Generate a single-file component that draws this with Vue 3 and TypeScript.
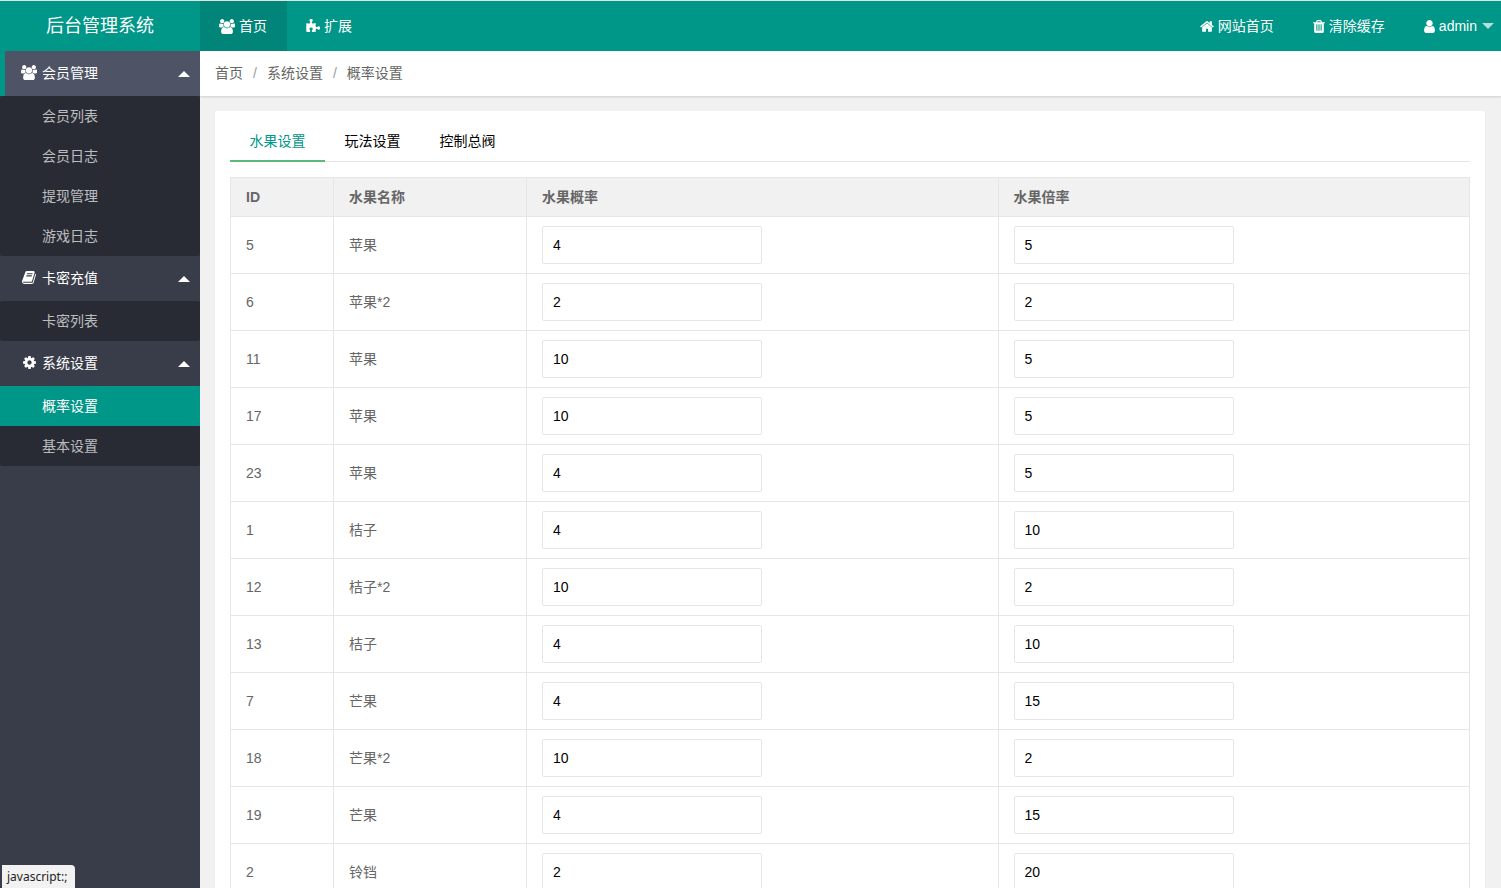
<script setup lang="ts">
import { ref, reactive } from 'vue'

interface Icon { box: string; width: number; path: string }
interface NavLink { label: string; icon: string; active?: boolean; more?: boolean }
interface MenuGroup { label: string; icon: string; focused?: boolean; open: boolean; items: string[] }
interface Fruit { id: number; name: string; chance: string; rate: string }

const icons: Record<string, Icon> = {
  users: { box: '0 0 1920 1792', width: 16, path: 'M593 896q-162 5-265 128h-134q-82 0-138-40.5t-56-118.5q0-353 124-353 6 0 43.5 21t97.5 42.5 119 21.5q67 0 133-23-5 37-5 66 0 159 93 256zm1071 637q0 120-73 189.5t-194 69.5h-874q-121 0-194-69.5t-73-189.5q0-53 3.5-103.5t14-109 26.5-108.5 43-97.5 62-81 85.5-53.5 111.5-20q10 0 43 21.5t73 48 107 48 135 21.5 135-21.5 107-48 73-48 43-21.5q61 0 111.5 20t85.5 53.5 62 81 43 97.5 26.5 108.5 14 109 3.5 103.5zm-1024-1277q0 106-75 181t-181 75-181-75-75-181 75-181 181-75 181 75 75 181zm704 384q0 159-112.5 271.5t-271.5 112.5-271.5-112.5-112.5-271.5 112.5-271.5 271.5-112.5 271.5 112.5 112.5 271.5zm576 225q0 78-56 118.5t-138 40.5h-134q-103-123-265-128 93-97 93-256 0-29-5-66 66 23 133 23 59 0 119-21.5t97.5-42.5 43.5-21q124 0 124 353zm-128-609q0 106-75 181t-181 75-181-75-75-181 75-181 181-75 181 75 75 181z' },
  home: { box: '64 0 1664 1792', width: 14, path: 'M1472 992v480q0 26-19 45t-45 19h-384v-384h-256v384h-384q-26 0-45-19t-19-45v-480q0-1 .5-3t.5-3l575-474 575 474q1 2 1 6zm223-69l-62 74q-8 9-21 11h-3q-13 0-21-7l-692-577-692 577q-12 8-24 7-13-2-21-11l-62-74q-8-10-7-23.5t11-21.5l719-599q32-26 76-26t76 26l244 204v-195q0-14 9-23t23-9h192q14 0 23 9t9 23v408l219 182q10 8 11 21.5t-7 23.5z' },
  trash: { box: '192 0 1408 1792', width: 12, path: 'M704 1376v-704q0-14-9-23t-23-9h-64q-14 0-23 9t-9 23v704q0 14 9 23t23 9h64q14 0 23-9t9-23zm256 0v-704q0-14-9-23t-23-9h-64q-14 0-23 9t-9 23v704q0 14 9 23t23 9h64q14 0 23-9t9-23zm256 0v-704q0-14-9-23t-23-9h-64q-14 0-23 9t-9 23v704q0 14 9 23t23 9h64q14 0 23-9t9-23zm-544-992h448l-48-117q-7-9-17-11h-317q-10 2-17 11zm928 32v64q0 14-9 23t-23 9h-96v948q0 83-47 143.5t-113 60.5h-832q-66 0-113-58.5t-47-141.5v-952h-96q-14 0-23-9t-9-23v-64q0-14 9-23t23-9h309l70-167q15-37 54-63t79-26h320q40 0 79 26t54 63l70 167h309q14 0 23 9t9 23z' },
  user: { box: '256 0 1280 1792', width: 11, path: 'M1536 1399q0 109-62.5 187t-150.5 78h-854q-88 0-150.5-78t-62.5-187q0-85 8.5-160.5t31.5-152 58.5-131 94-89 134.5-34.5q131 128 313 128t313-128q76 0 134.5 34.5t94 89 58.5 131 31.5 152 8.5 160.5zm-256-887q0 159-112.5 271.5t-271.5 112.5-271.5-112.5-112.5-271.5 112.5-271.5 271.5-112.5 271.5 112.5 112.5 271.5z' },
  cog: { box: '128 0 1536 1792', width: 13, path: 'M1152 896q0-106-75-181t-181-75-181 75-75 181 75 181 181 75 181-75 75-181zm512-109v222q0 12-8 23t-20 13l-185 28q-19 54-39 91 35 50 107 138 10 12 10 25t-9 23q-27 37-99 108t-94 71q-12 0-26-9l-138-108q-44 23-91 38-16 136-29 186-7 28-36 28h-222q-14 0-24.5-8.5t-11.5-21.5l-28-184q-49-16-90-37l-141 107q-10 9-25 9-14 0-25-11-126-114-165-168-7-10-7-23 0-12 8-23 15-21 51-66.5t54-70.5q-27-50-41-99l-183-27q-13-2-21-12.5t-8-23.5v-222q0-12 8-23t19-13l186-28q14-46 39-92-40-57-107-138-10-12-10-24 0-10 9-23 26-36 98.5-107.5t94.5-71.5q13 0 26 10l138 107q44-23 91-38 16-136 29-186 7-28 36-28h222q14 0 24.5 8.5t11.5 21.5l28 184q49 16 90 37l142-107q9-9 24-9 13 0 25 10 129 119 165 170 7 8 7 22 0 12-8 23-15 21-51 66.5t-54 70.5q26 50 41 98l183 28q13 2 21 12.5t8 23.5z' },
  book: { box: '64 0 1664 1792', width: 14, path: 'M1703 478q40 57 18 129l-275 906q-19 64-76.5 107.5t-122.5 43.5h-923q-77 0-148.5-53.5t-99.5-131.5q-24-67-2-127 0-4 3-27t4-37q1-8-3-21.5t-3-19.5q2-11 8-21t16.5-23.5 16.5-23.5q23-38 45-91.5t30-91.5q3-10 .5-30t-.5-28q3-11 17-28t17-23q21-36 42-92t25-90q1-9-2.5-32t.5-28q4-13 22-30.5t22-22.5q19-26 42.5-84.5t27.5-96.5q1-8-3-25.5t-2-26.5q2-8 9-18t18-23 17-21q8-12 16.5-30.5t15-35 16-36 19.5-32 26.5-23.5 36-11.5 47.5 5.5l-1 3q38-9 51-9h761q74 0 114 56t18 130l-274 906q-36 119-71.5 153.5t-128.5 34.5h-869q-27 0-38 15-11 16-1 43 24 70 144 70h923q29 0 56-15.5t35-41.5l300-987q7-22 5-57 38 15 59 43zm-1064 2q-4 13 2 22.5t20 9.5h608q13 0 25.5-9.5t16.5-22.5l21-64q4-13-2-22.5t-20-9.5h-608q-13 0-25.5 9.5t-16.5 22.5zm-83 256q-4 13 2 22.5t20 9.5h608q13 0 25.5-9.5t16.5-22.5l21-64q4-13-2-22.5t-20-9.5h-608q-13 0-25.5 9.5t-16.5 22.5z' },
  puzzle: { box: '64 0 1664 1792', width: 14, path: 'M1755 1082q0 81-44.5 135t-123.5 54q-41 0-77.5-17.5t-59-38-56.5-38-71-17.5q-110 0-110 124 0 39 16 115t15 115v5q-22 0-33 1-34 3-97.5 11.5t-115.5 13.5-98 5q-61 0-103-26.5t-42-83.5q0-37 17.5-71t38-56.5 38-59 17.5-77.5q0-79-54-123.5t-135-44.5q-84 0-143 45.5t-59 127.5q0 43 15 83t33.5 64.5 33.5 53 15 50.5q0 45-46 89-37 35-117 35-95 0-245-24-9-2-27.5-4t-27.5-4l-13-2q-1 0-3-1-2 0-2-1v-1024q2 1 17.5 3.5t34 5 21.5 3.5q150 24 245 24 80 0 117-35 46-44 46-89 0-22-15-50.5t-33.5-53-33.5-64.5-15-83q0-82 59-127.5t144-45.5q80 0 134 44.5t54 123.5q0 41-17.5 77.5t-38 59-38 56.5-17.5 71q0 57 42 83.5t103 26.5q64 0 180-15t163-17v2q-1 2-3.5 17.5t-5 34-3.5 21.5q-24 150-24 245 0 80 35 117 44 46 89 46 22 0 50.5-15t53-33.5 64.5-33.5 83-15q82 0 127.5 59t45.5 143z' },
}

const mainNav: NavLink[] = [
  { label: '首页', icon: 'users', active: true },
  { label: '扩展', icon: 'puzzle' },
]
const userNav: NavLink[] = [
  { label: '网站首页', icon: 'home' },
  { label: '清除缓存', icon: 'trash' },
  { label: 'admin', icon: 'user', more: true },
]

const groups = reactive<MenuGroup[]>([
  { label: '会员管理', icon: 'users', focused: true, open: true, items: ['会员列表', '会员日志', '提现管理', '游戏日志'] },
  { label: '卡密充值', icon: 'book', open: true, items: ['卡密列表'] },
  { label: '系统设置', icon: 'cog', open: true, items: ['概率设置', '基本设置'] },
])
const currentPage = ref('概率设置')

const crumbs = ['首页', '系统设置', '概率设置']
const tabs = ['水果设置', '玩法设置', '控制总阀']
const currentTab = ref(tabs[0])

const fruits = reactive<Fruit[]>([
  { id: 5, name: '苹果', chance: '4', rate: '5' },
  { id: 6, name: '苹果*2', chance: '2', rate: '2' },
  { id: 11, name: '苹果', chance: '10', rate: '5' },
  { id: 17, name: '苹果', chance: '10', rate: '5' },
  { id: 23, name: '苹果', chance: '4', rate: '5' },
  { id: 1, name: '桔子', chance: '4', rate: '10' },
  { id: 12, name: '桔子*2', chance: '10', rate: '2' },
  { id: 13, name: '桔子', chance: '4', rate: '10' },
  { id: 7, name: '芒果', chance: '4', rate: '15' },
  { id: 18, name: '芒果*2', chance: '10', rate: '2' },
  { id: 19, name: '芒果', chance: '4', rate: '15' },
  { id: 2, name: '铃铛', chance: '2', rate: '20' },
])
</script>

<template>
  <div class="app">
    <header class="topbar">
      <div class="brand">后台管理系统</div>
      <nav class="nav" aria-label="主导航">
        <a v-for="n in mainNav" :key="n.label" href="#" class="nav-link" :class="{ active: n.active }">
          <svg class="icon" :viewBox="icons[n.icon].box" :width="icons[n.icon].width" height="15" aria-hidden="true"><path :d="icons[n.icon].path" /></svg>
          <span>{{ n.label }}</span>
        </a>
      </nav>
      <nav class="nav user-nav" aria-label="用户导航">
        <a v-for="n in userNav" :key="n.label" href="#" class="nav-link">
          <svg class="icon" :viewBox="icons[n.icon].box" :width="icons[n.icon].width" height="15" aria-hidden="true"><path :d="icons[n.icon].path" /></svg>
          <span>{{ n.label }}</span>
          <i v-if="n.more" class="caret-down"></i>
        </a>
      </nav>
    </header>

    <div class="body">
      <aside class="sidebar">
        <section v-for="g in groups" :key="g.label">
          <button type="button" class="group" :class="{ focused: g.focused }" :aria-expanded="g.open" @click="g.open = !g.open">
            <span class="icon-slot">
              <svg class="icon" :viewBox="icons[g.icon].box" :width="icons[g.icon].width" height="15" aria-hidden="true"><path :d="icons[g.icon].path" /></svg>
            </span>
            <span>{{ g.label }}</span>
            <i class="caret" :class="{ closed: !g.open }"></i>
          </button>
          <div v-if="g.open" class="submenu">
            <a v-for="item in g.items" :key="item" href="#" class="sub-link" :class="{ current: item === currentPage }" @click.prevent="currentPage = item">{{ item }}</a>
          </div>
        </section>
      </aside>

      <main class="main">
        <nav class="crumbs" aria-label="面包屑">
          <template v-for="(c, i) in crumbs" :key="c">
            <span v-if="i" class="slash">/</span>
            <a href="#">{{ c }}</a>
          </template>
        </nav>

        <div class="card">
          <div class="tabs" role="tablist">
            <button v-for="t in tabs" :key="t" type="button" role="tab" class="tab" :class="{ selected: t === currentTab }" :aria-selected="t === currentTab" @click="currentTab = t">{{ t }}</button>
          </div>
          <table class="table">
            <colgroup>
              <col class="col-id" />
              <col class="col-name" />
              <col />
              <col />
            </colgroup>
            <thead>
              <tr><th>ID</th><th>水果名称</th><th>水果概率</th><th>水果倍率</th></tr>
            </thead>
            <tbody>
              <tr v-for="f in fruits" :key="f.id">
                <td>{{ f.id }}</td>
                <td>{{ f.name }}</td>
                <td><input v-model="f.chance" type="text" class="field" :aria-label="'水果概率 ' + f.id" /></td>
                <td><input v-model="f.rate" type="text" class="field" :aria-label="'水果倍率 ' + f.id" /></td>
              </tr>
            </tbody>
          </table>
        </div>
      </main>
    </div>

    <div class="status">javascript:;</div>
  </div>
</template>

<style>
body {
  margin: 0;
}
</style>

<style scoped>
.app {
  display: flex;
  flex-direction: column;
  height: 100vh;
  overflow: hidden;
  box-sizing: border-box;
  border-top: 1px solid #e2e2e2;
  font: 14px/24px "Liberation Sans", "Noto Sans CJK SC", sans-serif;
  color: #666;
}
a {
  color: inherit;
  text-decoration: none;
}
button {
  border: 0;
  background: none;
  font: inherit;
  cursor: pointer;
}
.icon {
  display: block;
  fill: currentColor;
}

.topbar {
  flex: none;
  display: flex;
  height: 50px;
  background: #009688;
  color: #fff;
}
.brand {
  width: 200px;
  font-size: 18px;
  line-height: 50px;
  text-align: center;
}
.nav {
  display: flex;
}
.nav-link {
  position: relative;
  display: flex;
  align-items: center;
  gap: 4px;
  padding: 0 20px 0 19px;
}
.nav-link.active {
  background: #028579;
}
.user-nav {
  margin-left: auto;
  padding-right: 4px;
}
.caret-down {
  position: absolute;
  right: 3px;
  top: 22px;
  border: 6px solid transparent;
  border-top-color: rgba(255, 255, 255, 0.7);
  border-bottom: 0;
}

.body {
  flex: 1;
  display: flex;
  min-height: 0;
}
.sidebar {
  flex: none;
  width: 200px;
  background: #393d49;
}
.group {
  display: flex;
  align-items: center;
  gap: 4px;
  width: 100%;
  height: 45px;
  padding: 0 10px 2px 20px;
  color: #fff;
}
.group.focused {
  background: #4e5465;
  box-shadow: inset 5px 0 #009688;
}
.icon-slot {
  display: flex;
  justify-content: center;
  width: 18px;
}
.caret {
  margin-top: 2px;
  margin-left: auto;
  border: 6px solid transparent;
  border-bottom-color: #fff;
  border-top: 0;
}
.caret.closed {
  border-top: 6px solid #fff;
  border-bottom: 0;
}
.submenu {
  border-radius: 2px;
  background: #282b33;
}
.sub-link {
  display: block;
  padding-left: 42px;
  line-height: 40px;
  color: rgba(255, 255, 255, 0.7);
}
.sub-link.current {
  background: #009688;
  color: #fff;
}

.main {
  flex: 1;
  min-width: 0;
  overflow: hidden;
  background: #f1f1f1;
}
.crumbs {
  display: flex;
  gap: 10px;
  padding: 0 15px;
  background: #fff;
  line-height: 45px;
  box-shadow: 0 1px 2px rgba(0, 0, 0, 0.15);
}
.slash {
  color: #999;
}
.card {
  margin: 15px 16px 15px 15px;
  padding: 10px 15px;
  border-radius: 2px;
  background: #fff;
  box-shadow: 0 1px 2px rgba(0, 0, 0, 0.05);
}
.tabs {
  display: flex;
  height: 40px;
  margin-bottom: 15px;
  border-bottom: 1px solid #e6e6e6;
}
.tab {
  height: 41px;
  min-width: 95px;
  padding: 0 15px;
  border-bottom: 2px solid transparent;
  color: #000;
}
.tab.selected {
  border-bottom-color: #5fb878;
  color: #009688;
}
.table {
  width: 100%;
  table-layout: fixed;
  border-collapse: collapse;
  line-height: 20px;
}
.col-id {
  width: 103px;
}
.col-name {
  width: 193px;
}
th,
td {
  padding: 9px 15px;
  border: 1px solid #e6e6e6;
  text-align: left;
}
th {
  background: #f1f1f1;
}
.field {
  display: block;
  box-sizing: border-box;
  width: 50%;
  height: 38px;
  padding: 0 10px;
  border: 1px solid #e6e6e6;
  border-radius: 2px;
  outline: none;
  background: #fff;
  font: inherit;
  color: #000;
}

.status {
  position: fixed;
  left: 2px;
  bottom: 0;
  padding: 1px 8px 0 5px;
  border-radius: 0 4px 0 0;
  background: #f2f2f2;
  color: #222;
  font: 12px/22px "Noto Sans", sans-serif;
}
</style>
